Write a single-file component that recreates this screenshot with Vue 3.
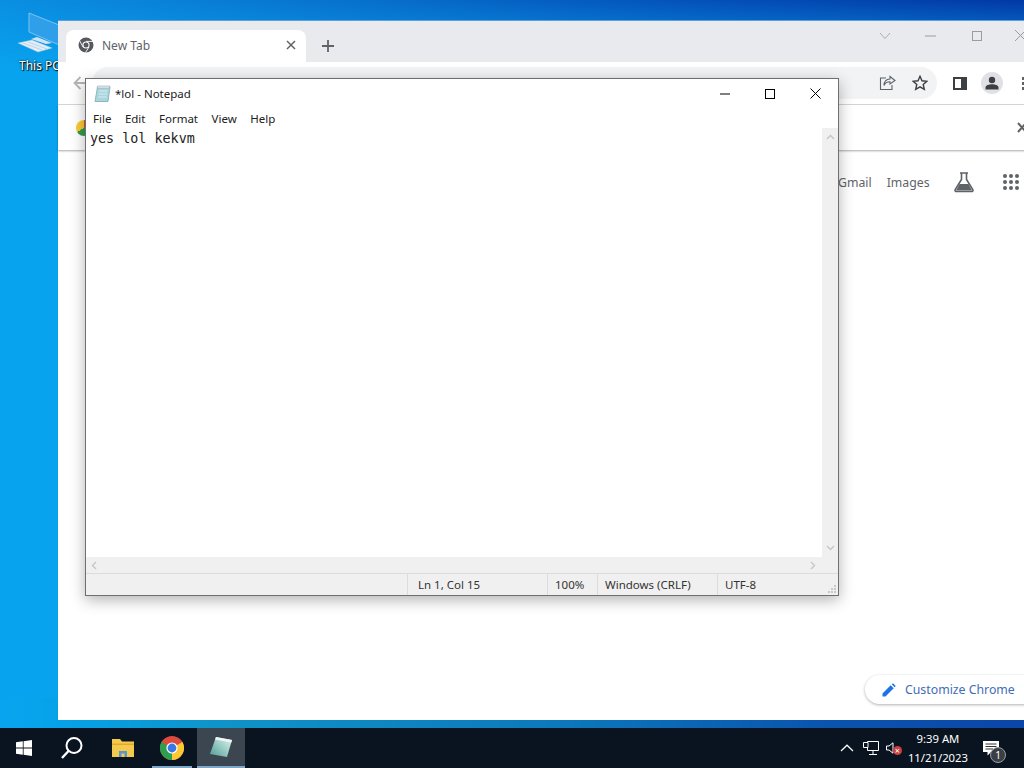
<script setup>
const menus = ['File', 'Edit', 'Format', 'View', 'Help']
const dots = Array.from({ length: 9 })
</script>

<template>
  <div class="screen">
    <div class="desktop">
      <div class="desk-icon">
        <svg class="pc" width="46" height="44" viewBox="0 0 46 44">
          <path d="M11 3 L46 17 V37 L11 22 Z" fill="#2f9fea" stroke="#7cc2f0" stroke-width="1" />
          <path d="M19 27 L34 33 L28 34 L13 29 Z" fill="#cfe3f2" />
          <path d="M0 33 L14 30 L34 38 L20 42 Z" fill="#e3eff8" stroke="#a9c6dc" stroke-width=".5" />
          <path d="M5 33 L24 40 M10 32 L29 39" stroke="#a9c6dc" stroke-width=".7" />
        </svg>
        <span class="desk-label">This PC</span>
      </div>

      <section class="chrome">
        <div class="tabstrip">
          <div class="tab">
            <svg width="16" height="16" viewBox="0 0 16 16">
              <circle cx="8" cy="8" r="7.5" fill="#55585c" />
              <circle cx="8" cy="8" r="3.6" fill="#fff" />
              <circle cx="8" cy="8" r="2.5" fill="#55585c" />
              <path d="M8 4.4 H15 M5 10 L1.8 4 M11 10 L7.5 15.5" stroke="#fff" stroke-width=".9" />
            </svg>
            <span class="tab-title">New Tab</span>
            <svg class="tab-x" width="10" height="10" viewBox="0 0 10 10">
              <path d="M1 1 L9 9 M9 1 L1 9" stroke="#5f6368" stroke-width="1.5" />
            </svg>
          </div>
          <svg class="plus" width="14" height="14" viewBox="0 0 14 14">
            <path d="M7 1 V13 M1 7 H13" stroke="#5f6368" stroke-width="1.8" />
          </svg>
          <div class="win-buttons">
            <svg width="12" height="8" viewBox="0 0 12 8"><path d="M1 1 L6 6.5 L11 1" fill="none" stroke="#a9abae" stroke-width="1" /></svg>
            <svg class="wb-min" width="11" height="2" viewBox="0 0 11 2"><path d="M0 1 H11" stroke="#9a9c9f" stroke-width="1" /></svg>
            <svg class="wb-max" width="10" height="10" viewBox="0 0 10 10"><rect x=".5" y=".5" width="9" height="9" fill="none" stroke="#9a9c9f" /></svg>
            <svg class="wb-x" width="11" height="11" viewBox="0 0 11 11"><path d="M0 0 L11 11 M11 0 L0 11" stroke="#9a9c9f" /></svg>
          </div>
        </div>

        <div class="toolbar">
          <svg class="back" width="14" height="14" viewBox="0 0 14 14">
            <path d="M14 7 H2 M7.5 1 L1.5 7 L7.5 13" fill="none" stroke="#b4b6b9" stroke-width="1.8" />
          </svg>
          <div class="omnibox">
            <svg width="17" height="16" viewBox="0 0 17 16">
              <path d="M11 1.5 L16 5.5 L11 9 V6.8 C7.5 6.8 6 8 5 10.5 C5 6.5 7.5 4.2 11 4 Z" fill="none" stroke="#5f6368" stroke-width="1.1" />
              <path d="M7 3 H1.5 V14.5 H13 V10" fill="none" stroke="#5f6368" stroke-width="1.1" />
            </svg>
            <svg width="16" height="16" viewBox="0 0 16 16">
              <path d="M8 1.3 L10 5.8 L14.9 6.3 L11.2 9.5 L12.3 14.4 L8 11.8 L3.7 14.4 L4.8 9.5 L1.1 6.3 L6 5.8 Z" fill="none" stroke="#3c4043" stroke-width="1.4" />
            </svg>
          </div>
          <svg class="side" width="14" height="13" viewBox="0 0 14 13">
            <rect x="1" y="1" width="12" height="11" fill="none" stroke="#3c4043" stroke-width="2" />
            <rect x="8" y="1" width="5" height="11" fill="#3c4043" />
          </svg>
          <div class="avatar">
            <svg width="14" height="14" viewBox="0 0 14 14">
              <circle cx="7" cy="4" r="3.2" fill="#3c4043" />
              <path d="M0.5 13.5 V11.5 C0.5 9 4 8.2 7 8.2 C10 8.2 13.5 9 13.5 11.5 V13.5 Z" fill="#3c4043" />
            </svg>
          </div>
          <span class="menu-dots"></span>
        </div>

        <div class="bookmarks">
          <span class="bm-chrome"></span>
          <svg class="bm-x" width="9" height="11" viewBox="0 0 9 11"><path d="M1 1 L9 10 M1 10 L9 1" stroke="#5f6368" stroke-width="2" /></svg>
        </div>

        <div class="page">
          <nav class="links">
            <span>Gmail</span>
            <span class="images">Images</span>
            <svg class="flask" width="22" height="22" viewBox="0 0 22 22">
              <path d="M7 2 H15 M8.5 2 V8.5 L2.2 18.5 Q1.5 20.5 3.5 20.5 H18.5 Q20.5 20.5 19.8 18.5 L13.5 8.5 V2" fill="none" stroke="#5f6368" stroke-width="1.6" />
              <path d="M6.5 13 H15.5 L19 19.5 H3 Z" fill="#5f6368" />
            </svg>
            <div class="grid-dots"><i v-for="(d, i) in dots" :key="i"></i></div>
          </nav>
          <div class="customize">
            <svg width="14" height="14" viewBox="0 0 14 14">
              <path d="M0.5 13.5 V10.5 L8.7 2.3 L11.7 5.3 L3.5 13.5 Z M9.7 1.3 L11 0.3 L13.7 3 L12.7 4.3 Z" fill="#1a73e8" />
            </svg>
            <span>Customize Chrome</span>
          </div>
        </div>
      </section>

      <section class="notepad">
        <header class="np-title">
          <svg width="17" height="18" viewBox="0 0 17 18">
            <path d="M3.5 2 H16 L14 16.5 H1 Z" fill="#a9d6dc" stroke="#7fa9b5" stroke-width=".8" />
            <path d="M3.5 1 H16 L15.6 3.2 H3.2 Z" fill="#dfe8ec" stroke="#8a9aa5" stroke-width=".5" />
            <path d="M5 6 H13.5 M4.5 9 H13 M4 12 H12.5" stroke="#d6eef0" stroke-width="1" />
          </svg>
          <span class="np-name">*lol - Notepad</span>
          <div class="np-controls">
            <svg width="10" height="2" viewBox="0 0 10 2"><path d="M0 1 H10" stroke="#000" /></svg>
            <svg width="10" height="10" viewBox="0 0 10 10"><rect x=".5" y=".5" width="9" height="9" fill="none" stroke="#000" /></svg>
            <svg width="11" height="11" viewBox="0 0 11 11"><path d="M.5 .5 L10.5 10.5 M10.5 .5 L.5 10.5" stroke="#000" /></svg>
          </div>
        </header>
        <div class="np-menu">
          <span v-for="m in menus" :key="m">{{ m }}</span>
        </div>
        <div class="np-body">
          <div class="np-text">yes lol kekvm</div>
          <div class="np-vscroll">
            <svg width="9" height="6" viewBox="0 0 9 6"><path d="M1 5 L4.5 1.5 L8 5" fill="none" stroke="#c6c6c6" stroke-width="1.4" /></svg>
            <svg width="9" height="6" viewBox="0 0 9 6"><path d="M1 1 L4.5 4.5 L8 1" fill="none" stroke="#c6c6c6" stroke-width="1.4" /></svg>
          </div>
        </div>
        <div class="np-hscroll">
          <svg width="6" height="9" viewBox="0 0 6 9"><path d="M5 1 L1.5 4.5 L5 8" fill="none" stroke="#c6c6c6" stroke-width="1.4" /></svg>
          <svg width="6" height="9" viewBox="0 0 6 9"><path d="M1 1 L4.5 4.5 L1 8" fill="none" stroke="#c6c6c6" stroke-width="1.4" /></svg>
        </div>
        <footer class="np-status">
          <div class="st st-empty"></div>
          <div class="st st-pos">Ln 1, Col 15</div>
          <div class="st st-zoom">100%</div>
          <div class="st st-eol">Windows (CRLF)</div>
          <div class="st st-enc">UTF-8</div>
          <svg class="grip" width="10" height="10" viewBox="0 0 10 10">
            <path d="M7 1 h2 v2 h-2z M4 4 h2 v2 h-2z M7 4 h2 v2 h-2z M1 7 h2 v2 h-2z M4 7 h2 v2 h-2z M7 7 h2 v2 h-2z" fill="#c9c9c9" />
          </svg>
        </footer>
      </section>
    </div>

    <footer class="taskbar">
      <div class="tb-item tb-start">
        <svg width="16" height="16" viewBox="0 0 16 16">
          <path d="M0 2.3 L6.8 1.3 V7.5 H0 Z M7.6 1.2 L16 0 V7.5 H7.6 Z M0 8.4 H6.8 V14.7 L0 13.7 Z M7.6 8.4 H16 V16 L7.6 14.8 Z" fill="#fff" />
        </svg>
      </div>
      <div class="tb-item tb-search">
        <svg width="24" height="24" viewBox="0 0 24 24">
          <circle cx="14" cy="9.5" r="7.5" fill="none" stroke="#fff" stroke-width="2" />
          <path d="M8.5 15 L2 22" stroke="#fff" stroke-width="2.4" />
        </svg>
      </div>
      <div class="tb-item tb-folder">
        <svg width="22" height="20" viewBox="0 0 22 20">
          <path d="M0 1 H8 L10 3.5 H22 V19 H0 Z" fill="#f4c94f" />
          <path d="M0 5.5 H22 V7 H0 Z" fill="#e5a823" />
          <path d="M7 13 H15 V19 H7 Z" fill="#5b96c9" />
          <path d="M9.5 15.5 H12.5 V19 H9.5 Z" fill="#f4c94f" />
        </svg>
      </div>
      <div class="tb-item tb-browser">
        <svg width="24" height="24" viewBox="0 0 24 24">
          <circle cx="12" cy="12" r="12" fill="#dd4b3e" />
          <path d="M12 12 L22.4 6 A12 12 0 0 1 12 24 Z" fill="#fcc934" />
          <path d="M12 12 L12 24 A12 12 0 0 1 1.6 6 Z" fill="#2f9e4f" />
          <circle cx="12" cy="12" r="5.6" fill="#fff" />
          <circle cx="12" cy="12" r="4.4" fill="#3b78e7" />
        </svg>
      </div>
      <div class="tb-item tb-active">
        <svg width="24" height="24" viewBox="0 0 24 24">
          <defs>
            <linearGradient id="npPage" x1="0" y1="1" x2="1" y2="0">
              <stop offset="0" stop-color="#4f9b96" />
              <stop offset=".55" stop-color="#9fd0c9" />
              <stop offset="1" stop-color="#e4f0ee" />
            </linearGradient>
          </defs>
          <path d="M7 2 L23 5 L18 22 L1 19 Z" fill="url(#npPage)" />
          <path d="M7 2 L23 5 L22.3 7.5 L6 4.5 Z" fill="#f0f4f4" />
        </svg>
      </div>
      <div class="tray">
        <svg width="14" height="8" viewBox="0 0 14 8"><path d="M1 7 L7 1.2 L13 7" fill="none" stroke="#fff" stroke-width="1.2" /></svg>
        <svg class="tr-net" width="16" height="14" viewBox="0 0 16 14">
          <path d="M4.5 .5 H15.5 V9.5 H4.5 Z" fill="none" stroke="#fff" />
          <path d="M.5 1.5 H5 V6.5 H.5 Z" fill="#0a1420" stroke="#fff" />
          <path d="M10 10 V13 M6 13.5 H14" stroke="#fff" />
        </svg>
        <div class="tr-vol">
          <svg width="10" height="12" viewBox="0 0 10 12"><path d="M.5 4 H3 L7 .8 V11.2 L3 8 H.5 Z" fill="none" stroke="#fff" /></svg>
          <span class="tr-mute">×</span>
        </div>
        <div class="clock">
          <span>9:39 AM</span>
          <span>11/21/2023</span>
        </div>
        <div class="notif">
          <svg width="16" height="15" viewBox="0 0 16 15">
            <path d="M0 0 H16 V11 H8 L4.5 14.5 V11 H0 Z" fill="#fff" />
            <path d="M2.5 3 H13.5 M2.5 5.5 H13.5 M2.5 8 H10" stroke="#333" />
          </svg>
          <span class="notif-count">1</span>
        </div>
      </div>
    </footer>
  </div>
</template>

<style>
html, body { margin: 0; background: #000; }
</style>

<style scoped>
.screen {
  width: 1024px;
  height: 768px;
  display: flex;
  flex-direction: column;
  overflow: hidden;
  font-family: "Noto Sans", "Liberation Sans", Arial, sans-serif;
}
.desktop {
  position: relative;
  flex: 1;
  background:
    linear-gradient(90deg, #08a4ef 0, #06a2e8 6%, #0f93c8 22%, #0c78bb 55%, #0a55ae 80%, #0b46a8 100%) bottom / 100% 30px no-repeat,
    linear-gradient(180deg, rgba(8, 163, 238, 0) 0, #08a3ee 70px) top / 100% 100% no-repeat,
    linear-gradient(90deg, #0a8fe2 0, #0874d0 30%, #0452ba 66%, #0238a6 100%);
  overflow: hidden;
}
.desk-icon { position: absolute; left: 14px; top: 10px; width: 60px; }
.pc { display: block; margin-left: 4px; }
.desk-label {
  position: absolute;
  left: 5px;
  top: 47px;
  font-size: 12px;
  color: #fff;
  white-space: nowrap;
  text-shadow: 0 0 2px #000, 1px 1px 1px #000;
}

.chrome {
  position: absolute;
  left: 58px;
  top: 21px;
  width: 1000px;
  height: 699px;
  background: #fff;
  display: flex;
  flex-direction: column;
  box-shadow: 0 -1px 0 #5f9fd8;
}
.tabstrip {
  height: 41px;
  flex: none;
  background: #e8eaed;
  display: flex;
  align-items: flex-start;
  padding: 9px 0 0 8px;
  box-sizing: border-box;
  position: relative;
}
.tab {
  width: 240px;
  height: 32px;
  background: #fff;
  border-radius: 8px 8px 0 0;
  display: flex;
  align-items: center;
  padding: 0 10px 2px 12px;
  box-sizing: border-box;
  gap: 8px;
}
.tab-title { flex: 1; font-size: 12px; color: #5f6368; }
.plus { margin: 9px 0 0 15px; }
.win-buttons {
  position: absolute;
  left: 821px;
  top: 9px;
  display: flex;
  align-items: center;
  height: 11px;
}
.wb-min { margin-left: 34px; }
.wb-max { margin-left: 36px; }
.wb-x { margin-left: 33px; }
.toolbar {
  height: 43px;
  flex: none;
  box-sizing: border-box;
  background: #fff;
  display: flex;
  align-items: center;
  border-bottom: 1px solid #d9dadc;
  padding: 0 0 0 15px;
}
.back { margin-right: 5px; flex: none; }
.omnibox {
  width: 845px;
  height: 32px;
  border-radius: 16px;
  background: #f1f3f4;
  display: flex;
  justify-content: flex-end;
  align-items: center;
  gap: 16px;
  padding-right: 9px;
  box-sizing: border-box;
  flex: none;
}
.side { margin-left: 16px; flex: none; }
.avatar {
  width: 22px;
  height: 22px;
  flex: none;
  border-radius: 50%;
  background: #e0e1e4;
  display: flex;
  align-items: center;
  justify-content: center;
  margin-left: 14px;
}
.menu-dots {
  width: 3px;
  height: 3px;
  flex: none;
  background: #5f6368;
  margin-left: 19px;
  box-shadow: 0 -5px #5f6368, 0 5px #5f6368;
}
.bookmarks {
  height: 45px;
  flex: none;
  background: #fff;
  box-shadow: 0 1px 2px rgba(0, 0, 0, .35);
  display: flex;
  align-items: center;
  box-sizing: border-box;
  padding-left: 18px;
}
.bm-chrome {
  width: 16px;
  height: 16px;
  border-radius: 50%;
  background: conic-gradient(#dd4b3e 0 120deg, #2f9e4f 120deg 240deg, #fcc934 240deg);
}
.bm-x { margin-left: 925px; }
.page { flex: 1; position: relative; }
.links {
  position: absolute;
  left: 780px;
  top: 20px;
  display: flex;
  align-items: center;
  font-size: 12.3px;
  color: #5f6368;
  height: 24px;
}
.images { margin-left: 15px; }
.flask { margin-left: 23px; }
.grid-dots {
  margin-left: 28px;
  display: grid;
  grid-template-columns: repeat(3, 4px);
  gap: 2px;
}
.grid-dots i { width: 4px; height: 4px; border-radius: 50%; background: #5f6368; }
.customize {
  position: absolute;
  left: 807px;
  top: 525px;
  width: 240px;
  height: 29px;
  border-radius: 15px;
  background: #fff;
  box-shadow: 0 1px 3px rgba(60, 64, 67, .4);
  display: flex;
  align-items: center;
  padding-left: 17px;
  gap: 9px;
  box-sizing: border-box;
  font-size: 12.3px;
  color: #3f6db5;
}

.notepad {
  position: absolute;
  left: 85px;
  top: 78px;
  z-index: 2;
  width: 754px;
  height: 518px;
  box-sizing: border-box;
  background: #f0f0f0;
  border: 1px solid #6f6f6f;
  box-shadow: 0 4px 14px rgba(0, 0, 0, .3);
  display: flex;
  flex-direction: column;
}
.np-title {
  height: 29px;
  background: #fff;
  display: flex;
  align-items: center;
  padding-left: 8px;
  font-size: 11.5px;
  color: #222;
  flex: none;
}
.np-name { margin-left: 4px; }
.np-controls {
  margin-left: auto;
  display: flex;
  align-items: center;
  gap: 35px;
  padding-right: 17px;
}
.np-menu {
  height: 20px;
  background: #fff;
  display: flex;
  align-items: center;
  gap: 13.5px;
  padding-left: 7px;
  font-size: 11.5px;
  color: #222;
  flex: none;
}
.np-body { flex: 1; display: flex; min-height: 0; background: #fff; }
.np-text {
  flex: 1;
  padding: 3px 0 0 4px;
  font-family: "DejaVu Sans Mono", "Liberation Mono", monospace;
  font-size: 13.4px;
  line-height: 16px;
  color: #222;
}
.np-vscroll {
  width: 16px;
  background: #f0f0f0;
  display: flex;
  flex-direction: column;
  justify-content: space-between;
  align-items: center;
  padding: 6px 0;
  box-sizing: border-box;
}
.np-hscroll {
  height: 16px;
  flex: none;
  display: flex;
  justify-content: space-between;
  align-items: center;
  padding: 0 22px 0 5px;
  background: #f0f0f0;
}
.np-status {
  height: 22px;
  flex: none;
  display: flex;
  align-items: center;
  font-size: 11.5px;
  color: #333;
  border-top: 1px solid #dcdcdc;
  box-sizing: border-box;
  position: relative;
}
.st { height: 100%; box-sizing: border-box; display: flex; align-items: center; padding-left: 10px; border-left: 1px solid #dcdcdc; }
.st-empty { width: 321px; border-left: 0; }
.st-pos { width: 140px; }
.st-zoom { width: 50px; padding-left: 7px; }
.st-eol { width: 120px; padding-left: 7px; }
.st-enc { flex: 1; padding-left: 7px; }
.grip { position: absolute; right: 1px; bottom: 1px; }

.taskbar {
  height: 40px;
  flex: none;
  background: #0a1421;
  display: flex;
  align-items: stretch;
}
.tb-item {
  width: 48px;
  flex: none;
  display: flex;
  align-items: center;
  justify-content: center;
  box-sizing: border-box;
  position: relative;
}
.tb-folder { width: 50px; padding-left: 3px; }
.tb-browser { width: 50px; padding-left: 2px; }
.tb-browser::after {
  content: "";
  position: absolute;
  left: 6px;
  right: 4px;
  bottom: 0;
  height: 2px;
  background: #7ea7c9;
}
.tb-active { background: #3b4650; margin-left: 1px; border-bottom: 2px solid #7ea7c9; }
.tray {
  margin-left: auto;
  display: flex;
  align-items: center;
  color: #fff;
  padding-right: 25px;
  font-size: 11.3px;
}
.tr-net { margin-left: 9px; }
.tr-vol { position: relative; margin-left: 7px; display: flex; }
.tr-mute {
  position: absolute;
  left: 7px;
  top: 4px;
  width: 9px;
  height: 9px;
  border-radius: 50%;
  background: #c9403f;
  font-size: 9px;
  line-height: 9px;
  text-align: center;
}
.clock {
  display: flex;
  flex-direction: column;
  align-items: center;
  margin-left: 12px;
  line-height: 19px;
}
.notif { position: relative; margin-left: 15px; display: flex; }
.notif-count {
  position: absolute;
  left: 7px;
  top: 6px;
  width: 16px;
  height: 16px;
  border-radius: 50%;
  background: #3b3f45;
  border: 1px solid #9aa0a6;
  box-sizing: border-box;
  font-size: 10px;
  line-height: 14px;
  text-align: center;
}
</style>
